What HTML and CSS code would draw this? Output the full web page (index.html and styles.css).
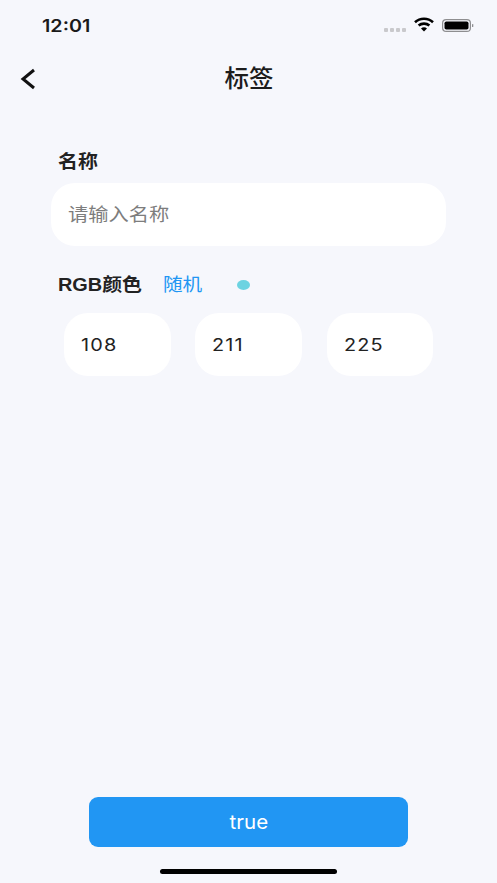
FILE: index.html
```html
<!DOCTYPE html>
<html lang="zh">
<head>
<meta charset="utf-8">
<title>标签</title>
<link rel="stylesheet" href="styles.css">
</head>
<body>
<div class="screen">
  <div class="status">
    <span class="time">12:01</span>
    <div class="status-icons">
      <div class="signal"><i></i><i></i><i></i><i></i></div>
      <svg class="wifi" width="20" height="15" viewBox="0 0 20 15"><path d="M1 5.2C6 .6 14 .6 19 5.2" fill="none" stroke="#000" stroke-width="2.6"/><path d="M4.6 8.6c3-2.6 7.800-2.600 10.800 0" fill="none" stroke="#000" stroke-width="2.600"/><path d="M7 11.400c1.800-1.400 4.200-1.400 6 0L10 14.600z" fill="#000"/></svg>
      <svg class="battery" width="32" height="13" viewBox="0 0 32 13"><rect x=".6" y=".6" width="27.800" height="11.800" rx="3.500" fill="none" stroke="#8e8e90" stroke-width="1.200"/><rect x="2.500" y="2.500" width="24" height="8" rx="1.800" fill="#000"/><rect x="30" y="5" width="1.300" height="3" rx=".6" fill="#8e8e90"/></svg>
    </div>
  </div>
  <header class="nav">
    <svg class="back" width="16" height="22" viewBox="0 0 16 22"><path d="M14 2 3 11l11 9" fill="none" stroke="#111" stroke-width="3"/></svg>
    <h1 class="title">标签</h1>
  </header>
  <main class="form">
    <label class="label name-label"><span class="wide">名称</span></label>
    <div class="field name-field"><span class="placeholder">请输入名称</span></div>
    <div class="color-row">
      <span class="label"><span class="wide">RGB颜色</span></span>
      <span class="random">随机</span>
      <span class="swatch"></span>
    </div>
    <div class="rgb">
      <div class="field small"><span class="num">108</span></div>
      <div class="field small"><span class="num">211</span></div>
      <div class="field small"><span class="num">225</span></div>
    </div>
  </main>
  <div class="footer">
    <button class="submit"><span class="submit-text">true</span></button>
    <div class="home"></div>
  </div>
</div>
</body>
</html>
```
FILE: styles.css
```css
* { box-sizing: border-box; }
html, body { margin: 0; height: 100%; }
body { background: #f6f7fc; font-family: "Liberation Sans", "Noto Sans CJK SC", sans-serif; color: #222; overflow: hidden; }
.screen { height: 883px; display: flex; flex-direction: column; }
.status { height: 50px; display: flex; justify-content: space-between; align-items: flex-start; padding: 16px 23px 0 42px; }
.time { font-family: Inter, sans-serif; font-size: 17px; line-height: 20px; font-weight: 600; color: #1a1a1a; display: inline-block; transform: scaleX(1.16); transform-origin: left center; }
.status-icons { display: flex; align-items: center; gap: 8px; padding-top: 3px; }
.signal { display: flex; gap: 1.500px; margin-top: 9px; }
.signal i { width: 4.500px; height: 4px; background: #c9c9cc; border-radius: 1px; display: block; }
.wifi { margin-top: -2px; }
.nav { height: 56px; display: flex; align-items: center; justify-content: center; position: relative; }
.back { position: absolute; left: 20px; top: 18px; }
.title { margin: 2px 0 0; font-size: 24px; line-height: 56px; font-weight: 500; color: #1c1c1c; display: inline-block; transform: scaleX(1.02); }
.form { padding: 44px 51px 0; }
.label { font-size: 18px; line-height: 24px; font-weight: 700; color: #222; display: block; padding-left: 7px; }
.wide { display: inline-block; transform: scaleX(1.105); transform-origin: left center; }
.field { background: #fff; display: flex; align-items: center; }
.name-label { margin-bottom: 9px; }
.name-field { height: 63px; border-radius: 24px; padding-left: 17px; }
.placeholder { font-size: 18px; color: #7d7d7d; line-height: 24px; display: inline-block; transform: scaleX(1.125); transform-origin: left center; }
.color-row { display: flex; align-items: center; margin-top: 27px; height: 24px; }
.random { font-size: 18px; line-height: 24px; color: #2196f3; margin-left: 29px; display: inline-block; transform: scaleX(1.09); transform-origin: left center; margin-top: -1px; }
.swatch { width: 13px; height: 10px; border-radius: 50%; background: #6cd3e1; margin-left: 38px; }
.rgb { display: flex; justify-content: space-between; padding: 0 13px; margin-top: 16px; }
.small { width: 106.500px; height: 63px; border-radius: 24px; padding-left: 17px; }
.num { font-family: Inter, sans-serif; font-size: 17px; line-height: 20px; letter-spacing: 1px; color: #222; display: inline-block; transform: scaleX(1.17); transform-origin: left center; }
.footer { margin-top: auto; display: flex; flex-direction: column; align-items: center; padding-bottom: 9px; }
.submit { width: 319px; height: 50px; background: #2196f3; border: 0; border-radius: 9px; color: #fff; padding: 0; font-family: inherit; }
.submit-text { font-family: Inter, sans-serif; font-size: 19px; display: inline-block; transform: scaleX(1.08); }
.home { width: 177px; height: 5px; border-radius: 3px; background: #000; margin-top: 22px; }
```
